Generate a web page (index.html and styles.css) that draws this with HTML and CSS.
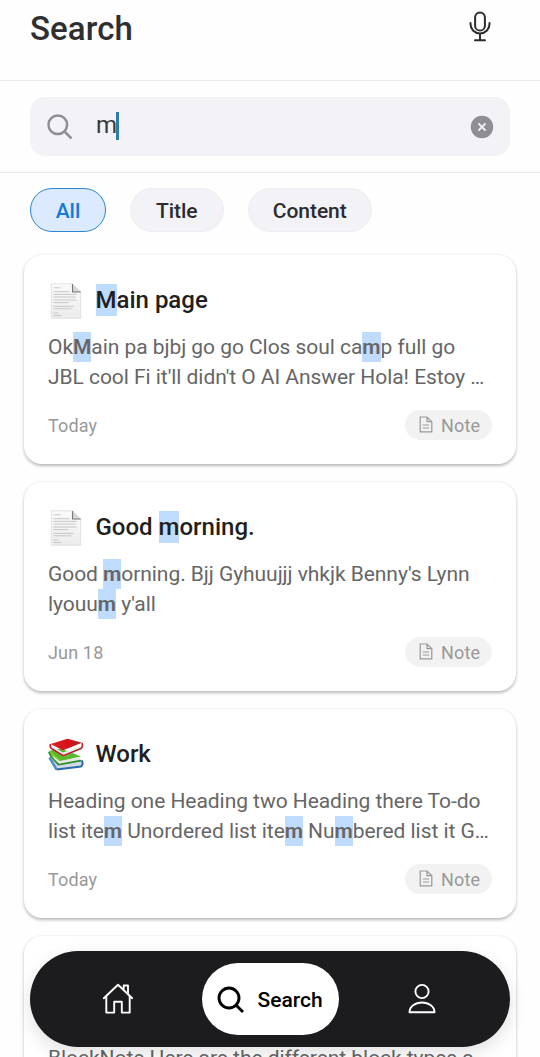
FILE: index.html
```html
<!DOCTYPE html>
<html lang="en">
<head>
<meta charset="utf-8">
<title>Search</title>
<link rel="stylesheet" href="styles.css">
</head>
<body>
<svg class="defs" width="0" height="0" aria-hidden="true">
  <defs>
    <linearGradient id="paper" x1="0" y1="0" x2="0" y2="1"><stop offset="0" stop-color="#fafafa"/><stop offset="1" stop-color="#ececec"/></linearGradient>
    <linearGradient id="red" x1="0" y1="0" x2="1" y2="0"><stop offset="0" stop-color="#d9232a"/><stop offset=".6" stop-color="#d80f17"/><stop offset="1" stop-color="#a4282a"/></linearGradient>
    <symbol id="page" viewBox="0 0 36 36">
      <path d="M3.3 .8H24.5L32.7 9V35.2H3.3Z" fill="url(#paper)" stroke="#dcdcdc" stroke-width=".8"/>
      <path d="M24.5 .8V9H32.7Z" fill="#d6d6d6"/>
      <path d="M24.5 1V9H32.7" fill="none" stroke="#777" stroke-width="1.1"/>
      <path d="M5.5 4.8h7M5.5 8.7h16M5.5 11.4h23M5.5 14h22M5.5 17h23M5.5 19.6h15M5.5 23.4h20M5.5 25.8h18M5.5 30h5M5.5 32.5h8" stroke="#c2c2c2" stroke-width=".9"/>
    </symbol>
    <symbol id="books" viewBox="0 0 36 36">
      <path d="M2 23.5 8.500 32.500 33.500 29 34 23.500 16 20Z" fill="#d3dae6"/>
      <path d="M1.500 20.500 8.500 32.500" stroke="#4b8ccc" stroke-width="2.500"/>
      <path d="M8.500 32.600 33 29.500c1.900-1.200 2.100-4.300 .5-6" fill="none" stroke="#2d69aa" stroke-width="2"/>
      <path d="M9 27.500 33 23.500" fill="none" stroke="#3b78b8" stroke-width="1.400"/>
      <path d="M1 14 13 11.500 33 19.500 11.500 24Z" fill="#59b82b"/>
      <path d="M1 14.500 11.500 24" stroke="#7dcc35" stroke-width="2.400"/>
      <path d="M5 19 12 24.500 32 20V23.500L11.500 27.500Z" fill="#e5eadf"/>
      <path d="M1 15c.5 3 5 9 10 12.700L32.500 23.700" fill="none" stroke="#32912c" stroke-width="1.700"/>
      <path d="M3 8.500 15 15.500 33.500 8.500V12L15.500 19.500 4 12.500Z" fill="#f0ecec"/>
      <path d="M2.500 7 19.500 1.800 34 5.800 15 13.200Z" fill="url(#red)"/>
      <path d="M2.500 7c-1 2.500 0 4 2 5.300L15.300 18.700 33 11.500c1.700-1.300 1.900-4.100 .8-5.500" fill="none" stroke="#b3232a" stroke-width="1.600"/>
    </symbol>
    <symbol id="note" viewBox="0 0 14 17">
      <path d="M1.200 1H8L12.800 5.700V15.900H1.200ZM8 1V5.700H12.800M3.800 9H10.200M3.800 12H10.200" fill="none" stroke="currentColor" stroke-width="1.200"/>
    </symbol>
  </defs>
</svg>
<div class="screen">
  <header class="header">
    <h1 class="header-title">Search</h1>
    <svg class="mic" viewBox="0 0 22 32"><rect x="6.100" y="1.600" width="9.800" height="18" rx="4.900"/><path d="M1.500 12V13a9.500 9.500 0 0 0 19 0v-1M11 22.500V29.300M6 29.300H16"/></svg>
  </header>
  <div class="search">
    <div class="field">
      <svg class="field-icon" viewBox="0 0 26 26"><circle cx="10.800" cy="10.800" r="9.300"/><path d="M17.500 17.500 24.500 24.500"/></svg>
      <span class="query">m</span><span class="caret"></span>
      <svg class="clear" viewBox="0 0 24 24"><circle cx="12" cy="12" r="11.200" fill="#8e8e93"/><path d="M8.400 8.400 15.600 15.600M15.600 8.400 8.400 15.600" stroke="#f2f2f7" stroke-width="1.900"/></svg>
    </div>
  </div>
  <div class="chips">
    <span class="chip chip-all active">All</span>
    <span class="chip chip-title">Title</span>
    <span class="chip chip-content">Content</span>
  </div>
  <main class="results">
    <article class="card">
      <div class="card-head"><svg class="emoji"><use href="#page"/></svg><h2 class="card-title"><mark>M</mark>ain page</h2></div>
      <p class="excerpt">Ok<mark>M</mark>ain pa bjbj go go Clos soul ca<mark>m</mark>p full go<br>JBL cool Fi it'll didn't O AI Answer Hola! Estoy …</p>
      <div class="card-foot"><span class="date">Today</span><span class="tag"><svg class="tag-icon"><use href="#note"/></svg>Note</span></div>
    </article>
    <article class="card">
      <div class="card-head"><svg class="emoji"><use href="#page"/></svg><h2 class="card-title">Good <mark>m</mark>orning.</h2></div>
      <p class="excerpt">Good <mark>m</mark>orning. Bjj Gyhuujjj vhkjk Benny's Lynn<br>lyouu<mark>m</mark> y'all</p>
      <div class="card-foot"><span class="date">Jun 18</span><span class="tag"><svg class="tag-icon"><use href="#note"/></svg>Note</span></div>
    </article>
    <article class="card">
      <div class="card-head"><svg class="emoji"><use href="#books"/></svg><h2 class="card-title">Work</h2></div>
      <p class="excerpt">Heading one Heading two Heading there To-do<br>list ite<mark>m</mark> Unordered list ite<mark>m</mark> Nu<mark>m</mark>bered list it G…</p>
      <div class="card-foot"><span class="date">Today</span><span class="tag"><svg class="tag-icon"><use href="#note"/></svg>Note</span></div>
    </article>
    <article class="card card-last">
      <div class="card-head"></div>
      <p class="excerpt"><br>BlockNote Here are the different block types a</p>
    </article>
  </main>
  <nav class="nav">
    <a class="nav-item"><svg class="nav-icon" viewBox="0 0 32 32"><path d="M1.800 15.200 16 1.800 30.200 15.200M4.300 13.500V29.600H12.200V18.800H19.800V29.600H27.700V13.500M21.700 7V2.500H26V11"/></svg></a>
    <a class="nav-item nav-active"><svg class="nav-search" viewBox="0 0 28 28"><circle cx="12" cy="12" r="10"/><path d="M19.200 19.200 26 26"/></svg>Search</a>
    <a class="nav-item"><svg class="nav-icon" viewBox="0 0 32 32"><circle cx="16" cy="8.500" r="6.600"/><path d="M3.500 29.300C3.500 23.500 9 19.500 16 19.500S28.500 23.500 28.500 29.300Z"/></svg></a>
  </nav>
</div>
</body>
</html>
```
FILE: styles.css
```css
* { box-sizing: border-box; }
body { margin: 0; background: #fefefe; font-family: Roboto, "Noto Sans", sans-serif; color: #2c2c2e; }
.defs { position: absolute; }
.screen { position: relative; width: 540px; height: 1057px; overflow: hidden; }
.header { display: flex; align-items: flex-start; justify-content: space-between; height: 81px; padding: 9px 49px 0 30px; border-bottom: 1.5px solid #ebebed; }
.header-title { margin: 0; font-size: 33px; line-height: 39px; font-weight: 500; letter-spacing: .1px; color: #2f2f31; }
.mic { width: 22px; height: 32px; margin-top: 2px; fill: none; stroke: #2c2c2e; stroke-width: 2; stroke-linecap: round; }
.search { height: 92px; padding: 16px 30px 0; border-bottom: 1.5px solid #ebebed; }
.field { display: flex; align-items: center; height: 59px; padding: 0 16px 0 17px; border-radius: 15px; background: #f2f2f7; }
.field-icon { width: 26px; height: 26px; fill: none; stroke: #8e8e93; stroke-width: 2.500; }
.query { margin: -3px 0 0 23px; font-size: 24px; line-height: 30px; color: #3a3a3c; }
.caret { width: 3px; height: 28px; margin: -2px 0 0 -1px; background: #2f7cab; }
.clear { width: 24px; height: 24px; margin-left: auto; }
.chips { display: flex; gap: 24px; padding: 15px 30px 0; height: 82px; }
.chip { display: flex; align-items: center; justify-content: center; height: 44px; border: 1.5px solid #eeeef2; border-radius: 22px; background: #f2f2f7; font-size: 21px; font-weight: 500; color: #2c2c2e; letter-spacing: -.05px; padding-top: 1px; }
.chip-all { width: 76px; }
.chip-title { width: 93.500px; }
.chip-content { width: 124.500px; }
.active { background: #dbeafe; border-color: #2c86d1; color: #1579d8; }
.results { display: flex; flex-direction: column; gap: 18px; padding: 0 24px; }
.card { flex: none; height: 209px; padding: 23px 24px 24px; border-radius: 18px; background: #fff; box-shadow: 0 1.5px 3px rgba(0,0,0,.24), 0 2px 5px rgba(0,0,0,.04); }
.card-head { display: flex; align-items: center; gap: 11.500px; height: 45px; }
.emoji { width: 36px; height: 36px; margin-top: 1px; }
.card-title { margin: 0; font-size: 24px; line-height: 33px; font-weight: 500; color: #1f1f21; }
.excerpt { margin: 9px 0 0; font-size: 21px; line-height: 30px; height: 60px; color: #666; white-space: nowrap; letter-spacing: -.05px; }
mark { padding: 2.700px 0; background: #bfdbfe; color: inherit; font-weight: 600; }
.card-title mark { padding: 2.300px 0; font-weight: 500; }
.card-foot { display: flex; align-items: center; justify-content: space-between; margin-top: 18px; height: 30px; }
.date { font-size: 18px; letter-spacing: .15px; color: #999; }
.tag { display: flex; align-items: center; width: 87px; height: 30px; padding-left: 14px; border-radius: 15px; background: #f2f2f2; color: #999; font-size: 18px; letter-spacing: .2px; }
.tag-icon { width: 14px; height: 17px; margin-right: 8px; margin-top: -1px; }
.nav { position: absolute; left: 30px; top: 951px; width: 480px; height: 96px; padding: 0 12px; display: grid; grid-template-columns: 152px 152px 152px; align-items: center; justify-items: center; border-radius: 48px; background: #1c1c1f; box-shadow: 0 6px 18px rgba(0,0,0,.12); }
.nav-item { display: flex; align-items: center; justify-content: center; color: #fff; }
.nav-icon { width: 32px; height: 32px; fill: none; stroke: #fff; stroke-width: 1.900; stroke-linejoin: round; stroke-linecap: round; }
.nav-active { width: 137px; height: 72px; border-radius: 36px; gap: 12px; background: #fff; color: #000; font-size: 21px; font-weight: 500; padding-top: 1px; }
.nav-search { width: 28px; height: 28px; fill: none; stroke: #000; stroke-width: 2.900; }
```
